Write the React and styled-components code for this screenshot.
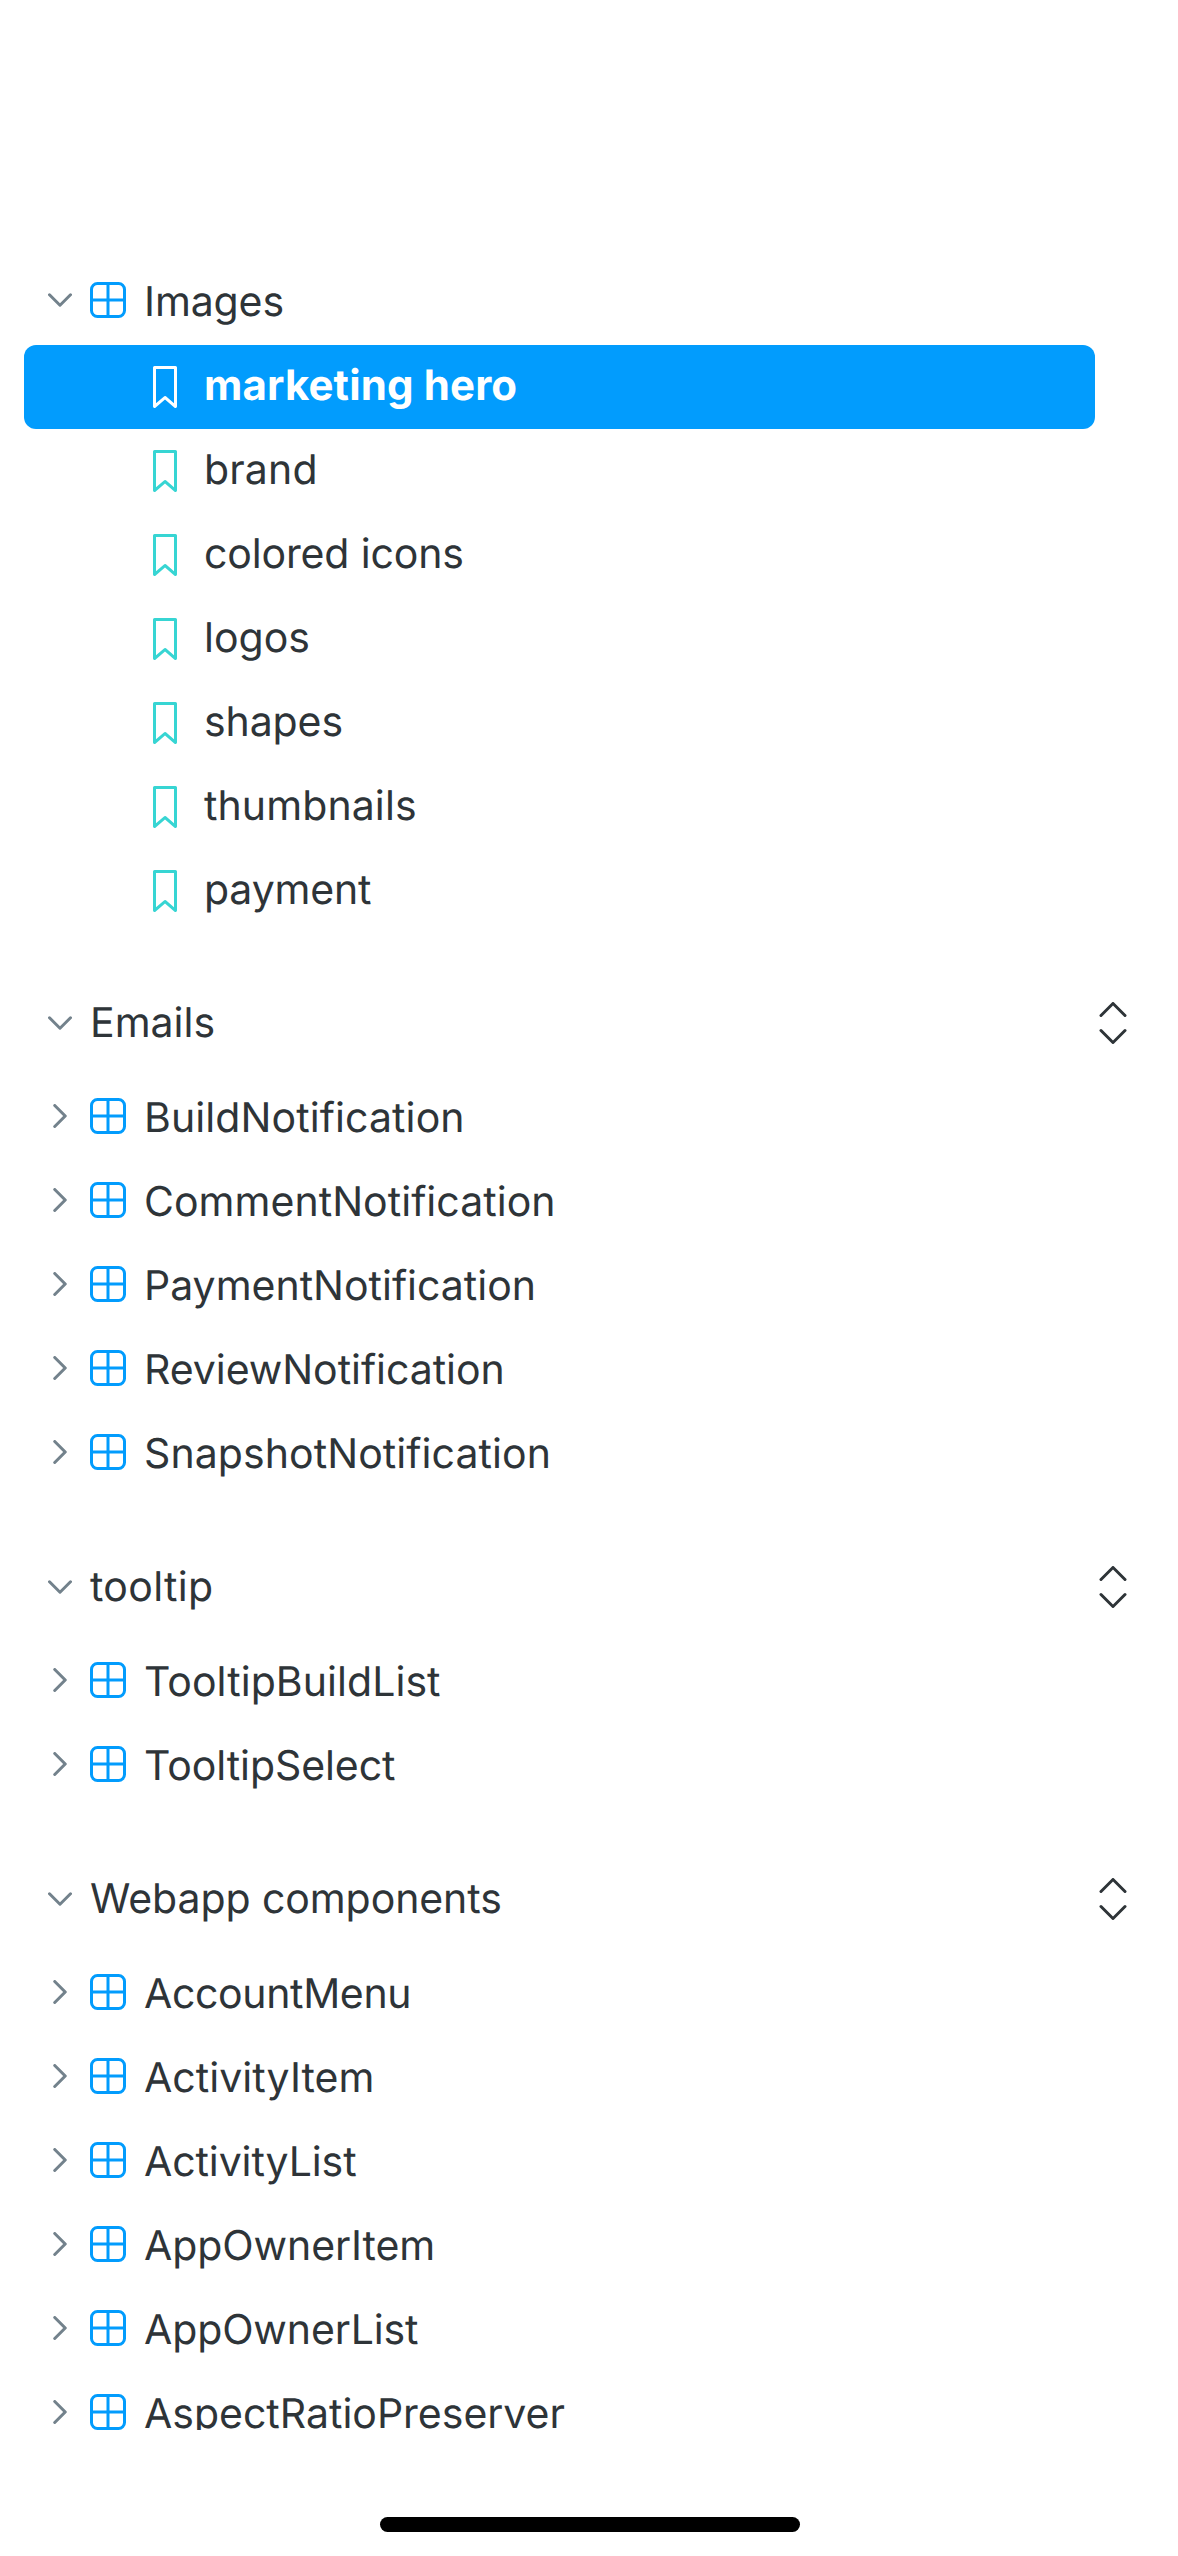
import React from "react";
import styled, { createGlobalStyle } from "styled-components";

const GlobalStyle = createGlobalStyle`
  * { box-sizing: border-box; }
  body { margin: 0; background: #fff; }
`;

const Screen = styled.div`
  display: flex;
  flex-direction: column;
  width: 1178px;
  height: 2556px;
  overflow: hidden;
  background: #fff;
  color: #2e3438;
  font-family: Inter, "Liberation Sans", sans-serif;
  font-size: 41px;
  text-rendering: geometricPrecision;
`;

const Sidebar = styled.nav`
  flex: none;
  height: 2430px;
  padding: 261px 44px 0 24px;
  overflow: hidden;
`;

const Row = styled.div`
  display: flex;
  align-items: flex-start;
  height: 84px;
  width: 1071px;
  padding-left: ${(p) => (p.$leaf ? 120 : 24)}px;
  border-radius: 12px;
  background: ${(p) => (p.$selected ? "#029cfd" : "transparent")};
  color: ${(p) => (p.$selected ? "#fff" : "inherit")};
  font-weight: ${(p) => (p.$selected ? 700 : 400)};
  font-size: ${(p) => (p.$selected ? 42 : 41)}px;
`;

const GroupHeader = styled.div`
  display: flex;
  align-items: flex-start;
  height: 144px;
  padding: 48px 0 0 24px;
`;

const Label = styled.span`
  margin-left: ${(p) => p.$gap}px;
  padding-top: ${(p) => p.$top || 15}px;
  line-height: 51px;
  white-space: nowrap;
  letter-spacing: ${(p) => p.$spacing || 0}px;
`;

const Arrow = styled.svg`
  flex: none;
  width: 24px;
  height: 24px;
  margin-top: ${(p) => p.$top}px;
  fill: #73828c;
  transform: ${(p) => (p.$open ? "rotate(90deg)" : "none")};
`;

const Glyph = styled.svg`
  flex: none;
  width: 42px;
  height: 42px;
  margin: ${(p) => p.$margin};
  fill: ${(p) => p.$color};
`;

const ExpandButton = styled.button`
  display: flex;
  margin: 21px 0 0 auto;
  padding: 0;
  border: 0;
  background: none;
`;

const HomeArea = styled.footer`
  display: flex;
  flex: 1;
  align-items: flex-end;
  justify-content: center;
  padding: 0 0 24px 2px;
`;

const HomeIndicator = styled.div`
  width: 420px;
  height: 15px;
  border-radius: 8px;
  background: #000;
`;

const Chevron = ({ open, top = 27 }) => (
  <Arrow viewBox="0 0 8 8" $open={open} $top={top}>
    <path d="M1.896 7.146a.5.5 0 1 0 .708.708l3.5-3.5a.5.5 0 0 0 0-.708l-3.5-3.5a.5.5 0 1 0-.708.708L5.043 4 1.896 7.146Z" />
  </Arrow>
);

const ComponentItem = ({ name, open, spacing }) => (
  <Row>
    <Chevron open={open} />
    <Glyph viewBox="0 0 14 14" $color="#029cfd" $margin="18px 0 0 15px">
      <path
        fillRule="evenodd"
        d="M3.5 1A2.5 2.5 0 0 0 1 3.5v7A2.5 2.5 0 0 0 3.5 13h7a2.5 2.5 0 0 0 2.5-2.5v-7A2.5 2.5 0 0 0 10.5 1h-7ZM12 6.5H7.5V2h3A1.5 1.5 0 0 1 12 3.5v3Zm0 1v3a1.5 1.5 0 0 1-1.5 1.5h-3V7.5H12ZM6.5 12V7.5H2v3A1.5 1.5 0 0 0 3.5 12h3ZM2 6.5h4.5V2h-3A1.5 1.5 0 0 0 2 3.5v3Z"
      />
    </Glyph>
    <Label $gap={15} $spacing={spacing}>{name}</Label>
  </Row>
);

const StoryItem = ({ name, selected, spacing }) => (
  <Row $leaf $selected={selected}>
    <Glyph viewBox="0 0 14 14" $color={selected ? "#fff" : "#37d5d3"} $margin="21px 0 0 0">
      <path
        fillRule="evenodd"
        d="M3.5 0h7a.5.5 0 0 1 .5.5v13a.5.5 0 0 1-.454.498.462.462 0 0 1-.371-.118L7 11.159l-3.175 2.72a.46.46 0 0 1-.379.118A.5.5 0 0 1 3 13.5V.5a.5.5 0 0 1 .5-.5ZM4 12.413l2.664-2.284a.454.454 0 0 1 .377-.128.498.498 0 0 1 .284.12L10 12.412V1H4v11.413Z"
      />
    </Glyph>
    <Label $gap={18} $spacing={spacing}>{name}</Label>
  </Row>
);

const Group = ({ name, items, spacing }) => (
  <section>
    <GroupHeader>
      <Chevron open top={30} />
      <Label $gap={18} $top={16} $spacing={spacing}>{name}</Label>
      <ExpandButton aria-label="Expand all">
        <Glyph viewBox="0 0 14 14" $color="#2e3438" $margin="0">
          <path d="m7.354.146 4 4a.5.5 0 0 1-.708.708L7 1.207 3.354 4.854a.5.5 0 1 1-.708-.708l4-4a.5.5 0 0 1 .708 0ZM11.354 9.146a.5.5 0 0 1 0 .708l-4 4a.5.5 0 0 1-.708 0l-4-4a.5.5 0 1 1 .708-.708L7 12.793l3.646-3.647a.5.5 0 0 1 .708 0Z" />
        </Glyph>
      </ExpandButton>
    </GroupHeader>
    {items.map(([item, itemSpacing]) => (
      <ComponentItem key={item} name={item} spacing={itemSpacing} />
    ))}
  </section>
);

// Each entry is [name, letter spacing in px].
const stories = [
  ["marketing hero", 0.14],
  ["brand", 0.15],
  ["colored icons", -0.14],
  ["logos", 0],
  ["shapes", -0.1],
  ["thumbnails", 0.1],
  ["payment", -0.15],
];

const groups = [
  ["Emails", 0, [
    ["BuildNotification", 0.1],
    ["CommentNotification", 0.04],
    ["PaymentNotification", 0],
    ["ReviewNotification", -0.05],
    ["SnapshotNotification", 0.08],
  ]],
  ["tooltip", 0.33, [
    ["TooltipBuildList", 0.06],
    ["TooltipSelect", -0.07],
  ]],
  ["Webapp components", -0.08, [
    ["AccountMenu", -0.35],
    ["ActivityItem", 0.05],
    ["ActivityList", -0.1],
    ["AppOwnerItem", -0.08],
    ["AppOwnerList", -0.12],
    ["AspectRatioPreserver", 0],
  ]],
];

export default function App() {
  return (
    <>
      <GlobalStyle />
      <Screen>
        <Sidebar>
          <ComponentItem name="Images" open spacing={-0.12} />
          {stories.map(([name, spacing], i) => (
            <StoryItem key={name} name={name} selected={i === 0} spacing={spacing} />
          ))}
          {groups.map(([name, spacing, items]) => (
            <Group key={name} name={name} items={items} spacing={spacing} />
          ))}
        </Sidebar>
        <HomeArea>
          <HomeIndicator />
        </HomeArea>
      </Screen>
    </>
  );
}
